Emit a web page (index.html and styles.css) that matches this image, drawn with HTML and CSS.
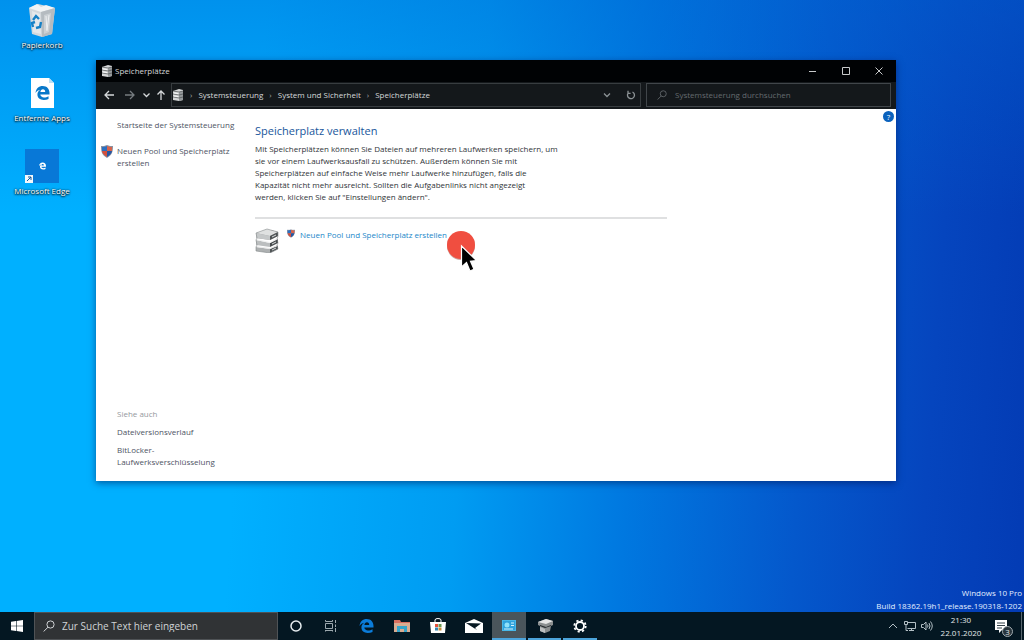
FILE: index.html
```html
<!DOCTYPE html>
<html lang="de">
<head>
<meta charset="utf-8">
<meta name="viewport" content="width=device-width, initial-scale=1">
<title>Speicherplätze</title>
<link rel="stylesheet" href="styles.css">
</head>
<body>
<svg class="defs" aria-hidden="true">
  <symbol id="drives" viewBox="0 0 24 25">
    <path d="M1 5 16 2l7 2v4l-8 4L1 10z" fill="#a3a5a6"/><path d="M1 5 12 1l11 3-8 4z" fill="#dfe1e1"/><path d="m15 8 8-4v4l-8 4z" fill="#4f5456"/><path d="m1 5 14 3v4L1 10z" fill="#c5c8c9"/>
    <path d="m1 12 14 3v4L1 17z" fill="#bbbebf"/><path d="m15 15 8-4v4l-8 4z" fill="#484d4f"/><path d="M1 12v-1l14 3 8-4v1l-8 4z" fill="#f0f1f1"/>
    <path d="m1 19 14 2v4L1 23z" fill="#adb0b1"/><path d="m15 21 8-4v4l-8 4z" fill="#505557"/><path d="M1 19v-1l14 2 8-3v1l-8 3z" fill="#e9eaea"/>
    <path d="m17 9 4-2M17 16l4-2M17 22l4-2" stroke="#d9dcdd"/>
    <path d="m1 5 11-4 11 3v4l-1 3 1 4-1 2 1 4-8 4-14-2v-4l1-2-1-5 1-2z" fill="none" stroke="#85898b" stroke-width=".6"/>
  </symbol>
  <symbol id="drives-light" viewBox="0 0 12 12">
    <path d="m1 2 6-2 4 1v10l-4 1-6-1z" fill="#d5d7d8"/><path d="m7 3 4-1v9l-4 1z" fill="#969a9c"/><path d="m1 5 6 1 4-1M1 8l6 1 4-1M1 2l6 1 4-1" fill="none" stroke="#4c5052" stroke-width=".7"/><path d="m2 4 4 .6M2 7l4 .6" stroke="#fff" stroke-width=".8"/>
  </symbol>
  <symbol id="shield" viewBox="0 0 12 13">
    <path d="M6 0c2 1 4 1 6 1 0 6-1 9-6 12C1 10 0 7 0 1c2 0 4 0 6-1z" fill="#8a93a3"/>
    <path d="M1 2c2 0 3-.3 5-1v5H1z" fill="#2c6fc0"/><path d="M6 1c2 .7 3 1 5 1v4H6z" fill="#d5634c"/><path d="M1 6h5v6C3 10 1 8 1 6z" fill="#d5503b"/><path d="M6 6h5c0 2-2 4-5 6z" fill="#2757a2"/>
  </symbol>
  <symbol id="edge" viewBox="0 0 16 16">
    <path d="M0 8C.6 3 3.700 0 8.300 0 13 0 16 3.200 16 8v1.800H5.500c.2 2.200 2 3.200 4.200 3.200 2 0 3.700-.5 5.200-1.400v3.200C13.300 15.600 11.500 16 9.400 16 5 16 2.200 13.500 2.200 9.800c0-2.300 1.200-4.200 3.200-5.400C3.200 4.800 1.300 6 0 8zm5.600-1.200h5.500c0-2-.9-3.200-2.600-3.200-1.600 0-2.600 1.200-2.900 3.200z" fill="currentColor"/>
  </symbol>
  <symbol id="lens" viewBox="0 0 12 12">
    <circle cx="7.500" cy="4.500" r="3.600" fill="none" stroke="currentColor"/><path d="M5 7.200.6 11.500" stroke="currentColor"/>
  </symbol>
</svg>

<main class="desktop">
  <nav class="shortcuts" aria-label="Desktop">
    <button class="shortcut" type="button">
      <svg class="shortcut-icon" viewBox="0 0 34 34"><path d="m4 5 9-4 17 4-3 26-10 3-10-3z" fill="#d3d8dc"/><path d="m4 5 12 4 14-4-9-3-5 2-4-3z" fill="#f2f4f5"/><path d="m16 9 14-4-3 26-10 3z" fill="#b5bbc0"/><path d="m7 8 8 3 1 20-8-2z" fill="#e4e8eb"/><path d="m19 12 7-2-2 19-5 2z" fill="#cbd0d4"/><path d="m21 13 1 15m2-16-2 15" stroke="#eef0f2"/><path d="m8 17 3-4 3 3m2 3-1 5-4 1m-3-1-1-4 3-1" fill="none" stroke="#1680c5" stroke-width="2.400"/></svg>
      <span>Papierkorb</span>
    </button>
    <button class="shortcut" type="button">
      <svg class="shortcut-icon" viewBox="0 0 34 34"><path d="M6 2h18l5 5v25H6z" fill="#fff"/><path d="M24 2v5h5z" fill="#bbdff5"/><use href="#edge" x="10" y="10" width="15" height="14" color="#0878c9"/></svg>
      <span>Entfernte Apps</span>
    </button>
    <button class="shortcut" type="button">
      <svg class="shortcut-icon" viewBox="0 0 34 34"><path d="M0 0h34v34H0z" fill="#0878d7"/><use href="#edge" x="14" y="13" width="7" height="8" color="#fff"/><path d="M0 26h8v8H0z" fill="#f4f8fb"/><path d="m2 32 4-4M3 28h3v3" fill="none" stroke="#155b9e"/></svg>
      <span>Microsoft Edge</span>
    </button>
  </nav>

  <section class="window" aria-label="Speicherplätze">
    <header class="titlebar">
      <svg class="small-icon"><use href="#drives-light"/></svg>
      <h1 class="title">Speicherplätze</h1>
      <button class="caption" type="button" aria-label="Minimieren"><svg viewBox="0 0 8 8"><path d="M0 4.500h7"/></svg></button>
      <button class="caption" type="button" aria-label="Maximieren"><svg viewBox="0 0 8 8"><path d="M.5.5h7v7h-7z"/></svg></button>
      <button class="caption" type="button" aria-label="Schließen"><svg viewBox="0 0 8 8"><path d="m.5.5 7 7m0-7-7 7"/></svg></button>
    </header>
    <div class="toolbar">
      <div class="history">
        <button type="button" aria-label="Zurück"><svg viewBox="0 0 10 10"><path d="M10 5H1m4-4L1 5l4 4"/></svg></button>
        <button type="button" class="dim" aria-label="Vorwärts"><svg viewBox="0 0 10 10"><path d="M0 5h9M5 1l4 4-4 4"/></svg></button>
        <button type="button" class="recent" aria-label="Zuletzt besucht"><svg viewBox="0 0 10 10"><path d="m2.500 3.500 3 3 3-3"/></svg></button>
        <button type="button" class="up" aria-label="Nach oben"><svg viewBox="0 0 10 10"><path d="M5 10V1M1.500 4.500 5 1l3.500 3.500"/></svg></button>
      </div>
      <div class="address">
        <svg class="small-icon"><use href="#drives-light"/></svg>
        <span class="sep">›</span><a href="#">Systemsteuerung</a>
        <span class="sep">›</span><a href="#">System und Sicherheit</a>
        <span class="sep">›</span><a href="#">Speicherplätze</a>
        <span class="grow"></span>
        <button type="button" aria-label="Vorherige Orte"><svg viewBox="0 0 10 10"><path d="m2 3.500 3 3 3-3"/></svg></button>
        <button type="button" aria-label="Aktualisieren"><svg viewBox="0 0 10 10"><path d="M6.500 2A3.500 3.500 0 1 1 2 3.300M2 .8v2.600h2.600"/></svg></button>
      </div>
      <label class="find"><svg viewBox="0 0 12 12"><use href="#lens"/></svg><input type="search" placeholder="Systemsteuerung durchsuchen" aria-label="Systemsteuerung durchsuchen"></label>
    </div>
    <div class="content">
      <aside class="sidebar">
        <a href="#">Startseite der Systemsteuerung</a>
        <div class="side-task"><svg><use href="#shield"/></svg><a href="#">Neuen Pool und Speicherplatz erstellen</a></div>
        <div class="see-also">
          <h3>Siehe auch</h3>
          <a href="#">Dateiversionsverlauf</a>
          <a href="#">BitLocker-<br>Laufwerksverschlüsselung</a>
        </div>
      </aside>
      <article class="pane">
        <h2>Speicherplatz verwalten</h2>
        <p>Mit Speicherplätzen können Sie Dateien auf mehreren Laufwerken speichern, um<br>sie vor einem Laufwerksausfall zu schützen. Außerdem können Sie mit<br>Speicherplätzen auf einfache Weise mehr Laufwerke hinzufügen, falls die<br>Kapazität nicht mehr ausreicht. Sollten die Aufgabenlinks nicht angezeigt<br>werden, klicken Sie auf "Einstellungen ändern".</p>
        <hr>
        <div class="pool-task"><svg class="pool-icon"><use href="#drives"/></svg><div class="pool-link"><svg class="pool-shield" viewBox="0 0 12 13"><use href="#shield"/></svg><a href="#">Neuen Pool und Speicherplatz erstellen</a></div></div>
      </article>
      <button class="help" type="button" aria-label="Hilfe">?</button>
    </div>
  </section>

  <svg class="pointer" viewBox="0 0 30 44" aria-hidden="true"><circle cx="14" cy="15" r="14" fill="#87352f" opacity=".45"/><circle cx="14" cy="14" r="14" fill="#f04e40"/><path d="M14.500 15v21l5-4.500 3.500 8.500 4-1.800-3.500-8 6-.6z" fill="#000" stroke="#fff" stroke-width="1.200"/></svg>

  <p class="watermark">Windows 10 Pro<br>Build 18362.19h1_release.190318-1202</p>
</main>

<footer class="taskbar">
  <button class="start" type="button" aria-label="Start"><svg viewBox="0 0 12 12"><path d="m0 1.800 5-.8v4.700H0zM5.600.9 12 0v5.700H5.600zM0 6.300h5V11l-5-.8zM5.600 6.300H12V12l-6.400-.9z" fill="#fff"/></svg></button>
  <label class="search"><svg viewBox="0 0 12 12"><use href="#lens"/></svg><input type="text" placeholder="Zur Suche Text hier eingeben" aria-label="Suche"></label>
  <nav class="apps" aria-label="Apps">
    <button type="button" aria-label="Cortana"><svg viewBox="0 0 18 18"><circle cx="9" cy="9" r="5" fill="none" stroke="#e7edf0" stroke-width="1.500"/></svg></button>
    <button type="button" aria-label="Taskansicht"><svg viewBox="0 0 18 18"><path d="M3.500 4.500V3m7 1.500V3m-7 11.500V13m7 1.500V13M3.500 6.500h7v5h-7zM3.500 4.500h7m-7 9h7M13.500 3v3m0 5v4m0-7.500V10" fill="none" stroke="#9ca8ae"/></svg></button>
    <button type="button" aria-label="Microsoft Edge"><svg viewBox="0 0 18 18"><use href="#edge" x="1" y="2" width="15" height="14" color="#0b7cda"/></svg></button>
    <button type="button" aria-label="Explorer"><svg viewBox="0 0 18 18"><path d="M1 3h6l1 2h9v10H1z" fill="#d96f5f"/><path d="M1 6h16v9H1z" fill="#d9ac92"/><path d="M4 9h10v6h-3v-3H7v3H4z" fill="#36a4ca"/></svg></button>
    <button type="button" aria-label="Store"><svg viewBox="0 0 18 18"><path d="M1 5h16l-1 11H2z" fill="#fff"/><path d="M6 5V3q0-1.500 3-1.500T12 3v2" fill="none" stroke="#fff"/><path d="M6 7h3v3H6z" fill="#e4513c"/><path d="M9.500 7h3v3h-3z" fill="#699850"/><path d="M6 10.500h3v3H6z" fill="#3387b5"/><path d="M9.500 10.500h3v3h-3z" fill="#c58c37"/></svg></button>
    <button type="button" aria-label="Mail"><svg viewBox="0 0 18 18"><path d="m0 6 9-4 9 4v10H0z" fill="#fff"/><path d="m1 6 15 .5-6 4.500 2 2z" fill="#071923"/></svg></button>
    <button type="button" class="active" aria-label="Systemsteuerung"><svg viewBox="0 0 18 18"><path d="M2 3h14v11H2z" fill="#48b8e8"/><path d="M3 4h12v9H3z" fill="#2fa2dc"/><circle cx="7" cy="8" r="2.500" fill="#8fe1fa"/><path d="M11 6h3m-3 2.500h3M4 12h9" stroke="#d4f4fd"/></svg></button>
    <button type="button" class="open" aria-label="Speicherplätze"><svg viewBox="0 0 18 18"><path d="m2 5 8-3 7 2v4l-2 1-1 5-5 2-5-2V9L2 8z" fill="#8b8f90"/><path d="m2 5 8-3 7 2-7 3z" fill="#e6e7e7"/><path d="m4 9 5 2 6-2v-1l-5 2-6-2z" fill="#252b2e"/><path d="m4 10 5 2v4l-5-2z" fill="#bcbfc0"/></svg></button>
    <button type="button" class="open" aria-label="Einstellungen"><svg viewBox="0 0 18 18"><circle cx="9" cy="9" r="4" fill="none" stroke="#fff" stroke-width="1.800"/><circle cx="9" cy="9" r="5.700" fill="none" stroke="#fff" stroke-width="1.800" stroke-dasharray="2.200 2.276"/></svg></button>
  </nav>
  <div class="tray">
    <button type="button" aria-label="Ausgeblendete Symbole"><svg viewBox="0 0 12 12"><path d="m2 8 4-4 4 4"/></svg></button>
    <button type="button" aria-label="Netzwerk"><svg viewBox="0 0 12 12"><path d="M4 2.500h7.500v6H3.500M7.500 8.500V11M5 10.500h5M.5 1.500h3v3h-3zM2 4.500v6h2"/></svg></button>
    <button type="button" aria-label="Lautstärke"><svg viewBox="0 0 12 12"><path d="M.5 4.500h2L5 2v8L2.500 7.500h-2zM6.500 4.500q1 1.500 0 3M8 3q2 3 0 6M9.500 1.500q3.500 4.500 0 9"/></svg></button>
    <time class="clock" datetime="2020-01-22T21:30">21:30<br>22.01.2020</time>
    <button type="button" class="notify" aria-label="Benachrichtigungen"><svg viewBox="0 0 18 18"><path d="M1 1h12v10H8l-3 3v-3H1z" fill="#fff"/><path d="M3 4h8M3 6.500h8M3 9h5" stroke="#35434a"/></svg><span class="badge">3</span></button>
  </div>
</footer>
</body>
</html>
```
FILE: styles.css
```css
* { box-sizing: border-box; }
body {
  margin: 0;
  min-height: 100vh;
  display: flex;
  flex-direction: column;
  overflow: hidden;
  font: 8px/12px "Open Sans", "Noto Sans", sans-serif;
}
button { padding: 0; border: 0; background: none; color: inherit; font: inherit; }
input { min-width: 0; flex: 1; padding: 0; border: 0; outline: 0; background: none; color: inherit; font: inherit; }
input::placeholder { color: inherit; opacity: 1; }
a { color: inherit; text-decoration: none; }
h1, h2, h3, p { margin: 0; font-weight: 400; }
svg { display: block; flex: none; }
.defs { position: absolute; width: 0; height: 0; }

.desktop {
  position: relative;
  flex: 1;
  background:
    linear-gradient(180deg, rgba(0, 100, 210, 0.4), rgba(0, 150, 240, 0) 35%),
    linear-gradient(94deg, #00b0ff 0%, #00b0ff 25%, #009cf2 46%, #0078e0 62%, #0458cc 78%, #0545be 90%, #033bb4 100%);
}
.shortcuts { display: flex; flex-direction: column; width: 84px; padding-top: 3px; }
.shortcut {
  display: flex;
  flex-direction: column;
  align-items: center;
  gap: 2px;
  height: 73px;
  color: #fff;
  text-shadow: 0 1px 2px #000, 0 0 2px #000;
  white-space: nowrap;
}
.shortcut-icon { width: 34px; height: 34px; }

.window {
  position: absolute;
  inset: 60px 128px 131px 96px;
  display: flex;
  flex-direction: column;
  background: #fff;
  box-shadow: 0 2px 7px rgba(0, 20, 80, 0.55);
}
.titlebar { display: flex; align-items: center; height: 22px; padding: 0 2px 0 5px; gap: 2px; background: #000204; color: #d5d7d8; }
.title { flex: 1; font-size: 8px; }
.small-icon { width: 12px; height: 12px; }
.caption { display: grid; place-items: center; width: 31px; height: 22px; }
.caption svg { width: 8px; height: 8px; fill: none; stroke: #c8cacb; }
.toolbar { display: flex; gap: 5px; height: 27px; padding: 1px 5px 2px 0; background: #14181b; color: #d5d8da; }
.toolbar button svg { width: 10px; height: 10px; fill: none; stroke: currentColor; stroke-width: 1.3; }
.history { display: flex; align-items: center; width: 70px; padding-left: 8px; gap: 6px; }
.history button { width: 12px; }
.history .dim { color: #777c80; margin-left: 4px; }
.history .recent { margin-right: -2px; }
.address { display: flex; align-items: center; flex: 1; min-width: 0; gap: 6px; border: 1px solid #383d40; white-space: nowrap; }
.address .sep { color: #a6abad; }
.address button { width: 18px; padding: 0 4px; color: #8c9295; }
.grow { flex: 1; }
.find { display: flex; align-items: center; flex: 0 1 245px; min-width: 0; padding-left: 10px; gap: 8px; border: 1px solid #41464a; color: #656b6f; }
.find svg { width: 10px; height: 10px; }

.content { position: relative; display: flex; flex: 1; min-height: 0; color: #303438; }
.sidebar { display: flex; flex-direction: column; width: 159px; padding: 10px 12px 13px 21px; color: #4d5363; white-space: nowrap; }
.side-task { display: flex; gap: 4px; margin: 14px 0 0 -16px; white-space: normal; }
.side-task svg { width: 12px; height: 13px; }
.see-also { display: flex; flex-direction: column; gap: 6px; margin-top: auto; }
.see-also h3 { font-size: 8px; color: #94989d; }
.pane { flex: 1; padding-top: 14px; white-space: nowrap; }
.pane h2 { font-size: 11px; line-height: 16px; color: #17569b; }
.pane p { margin-top: 4px; }
.pane hr { width: 412px; max-width: 90%; margin: 14px 0 9px; border: 0; border-top: 2px solid #dfe0e1; }
.pool-task { display: flex; gap: 8px; color: #1b87c9; }
.pool-icon { width: 24px; height: 25px; }
.pool-link { display: flex; gap: 5px; padding-top: 1px; }
.pool-shield { width: 8px; height: 9px; }
.help { position: absolute; top: 2px; right: 2px; width: 11px; height: 11px; border-radius: 50%; background: #0b62bd; color: #fff; line-height: 11px; }

.pointer { position: absolute; left: 447px; top: 231px; width: 30px; height: 44px; }
.watermark { position: absolute; right: 2px; bottom: 0; color: #e2efff; line-height: 13px; text-align: right; }

.taskbar { display: flex; height: 28px; background: #041722; color: #e2e7e9; }
.start { display: grid; place-items: center; width: 34px; }
.start svg { width: 12px; height: 12px; }
.search { display: flex; align-items: center; width: 244px; gap: 7px; padding-left: 8px; border: 1px solid #4f5356; background: #303335; color: #d0d3d5; font-size: 10px; }
.search svg { width: 12px; height: 12px; }
.apps { display: grid; grid-template-columns: repeat(9, 1fr); width: 320px; }
.apps button { display: grid; place-items: center; margin: 0 1px; border-bottom: 2px solid transparent; padding-top: 2px; }
.apps svg { width: 18px; height: 18px; }
.apps .open { border-color: #4ca5dc; }
.apps .active { border-color: #4ca5dc; background: #4a555b; }
.tray { display: flex; align-items: center; margin-left: auto; padding-right: 2px; gap: 5px; }
.tray button svg { width: 12px; height: 12px; fill: none; stroke: #b4c0c6; }
.clock { width: 46px; line-height: 13px; text-align: center; }
.tray .notify { position: relative; height: 28px; padding: 4px 9px 0 5px; border-right: 1px solid #5a6870; }
.tray .notify svg { width: 18px; height: 18px; stroke: none; }
.badge { position: absolute; right: 8px; bottom: 3px; width: 11px; height: 11px; border: 1px solid #a3adb1; border-radius: 50%; background: #28343b; line-height: 9px; text-align: center; }
```
